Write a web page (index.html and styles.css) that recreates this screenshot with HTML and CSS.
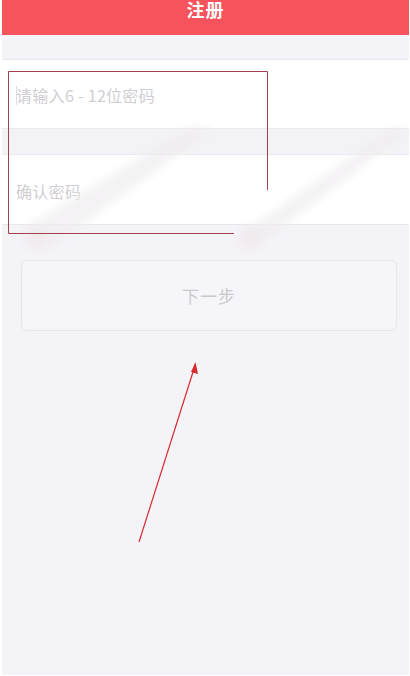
FILE: index.html
```html
<!DOCTYPE html>
<html lang="zh-CN">
<head>
<meta charset="utf-8">
<title>注册</title>
<link rel="stylesheet" href="styles.css">
</head>
<body>
<div class="screen">
  <header class="topbar"><h1 class="title">注册</h1></header>
  <div class="gap"></div>
  <div class="field">
    <span class="caret"></span>
    <span class="placeholder">请输入6 - 12位密码</span>
  </div>
  <div class="divider"></div>
  <div class="field">
    <span class="placeholder">确认密码</span>
  </div>
  <div class="actions">
    <button class="next" type="button">下一步</button>
  </div>
  <svg class="overlay" width="407" height="675" viewBox="0 0 407 675" aria-hidden="true">
    <defs>
      <filter id="blur" x="-20%" y="-20%" width="140%" height="140%">
        <feGaussianBlur stdDeviation="4"/>
      </filter>
    </defs>
    <g filter="url(#blur)">
      <path d="M20 230 L186 128 L212 128 L46 250 Z" fill="#efedf0" opacity="0.7"/>
      <path d="M234 238 L390 128 L407 130 L254 248 Z" fill="#efedf0" opacity="0.7"/>
      <circle cx="34" cy="238" r="11" fill="#f1e9ec" opacity="0.85"/>
      <circle cx="248" cy="238" r="11" fill="#f1e9ec" opacity="0.85"/>
    </g>
    <path d="M6.5 71.5 H265.5 V190 M232 233.5 H6.5 V71.5" fill="none" stroke="#a0414b" stroke-width="1"/>
    <line x1="137" y1="542" x2="191" y2="372" stroke="#d62b2b" stroke-width="1.2"/>
    <path d="M193.5 362 L196 374 L189 372 Z" fill="#d62b2b"/>
  </svg>
</div>
</body>
</html>
```

FILE: styles.css
```css
html, body {
  margin: 0;
  padding: 0;
  background: #ffffff;
}

body {
  font-family: "Noto Sans CJK SC", "Noto Sans", sans-serif;
}

.screen {
  position: relative;
  width: 407px;
  height: 675px;
  margin-left: 2px;
  background: #f4f3f8;
  display: flex;
  flex-direction: column;
  overflow: hidden;
}

.topbar {
  height: 35px;
  background: #f6535d;
  display: flex;
  justify-content: center;
  align-items: flex-start;
}

.title {
  margin: 0;
  font-size: 18px;
  line-height: 18px;
  font-weight: 700;
  color: #ffffff;
  letter-spacing: 1px;
}

.gap {
  height: 24px;
  border-bottom: 1px solid #e9e8ec;
}

.field {
  height: 68px;
  background: #ffffff;
  display: flex;
  align-items: center;
  padding-left: 14px;
  padding-top: 2px;
  box-sizing: border-box;
  position: relative;
}

.placeholder {
  font-size: 16px;
  color: #cfced2;
  letter-spacing: 0.3px;
}

.caret {
  width: 1px;
  height: 19px;
  background: #dcdbdf;
  position: absolute;
  left: 14px;
  top: 26px;
}

.divider {
  height: 25px;
  background: #f3f2f6;
  border-top: 1px solid #ebeaee;
  border-bottom: 1px solid #ebeaee;
}

.field + .divider + .field {
  border-bottom: 1px solid #e8e7eb;
  height: 70px;
}

.actions {
  padding: 35px 12px 0 19px;
}

.next {
  width: 100%;
  height: 71px;
  border: 1px solid #e7e6eb;
  border-radius: 6px;
  background: #f6f5f9;
  font-family: "Noto Sans CJK SC", sans-serif;
  font-size: 17px;
  color: #cac9cd;
  letter-spacing: 1px;
  padding: 0;
}

.overlay {
  position: absolute;
  left: 0;
  top: 0;
  pointer-events: none;
}
```
